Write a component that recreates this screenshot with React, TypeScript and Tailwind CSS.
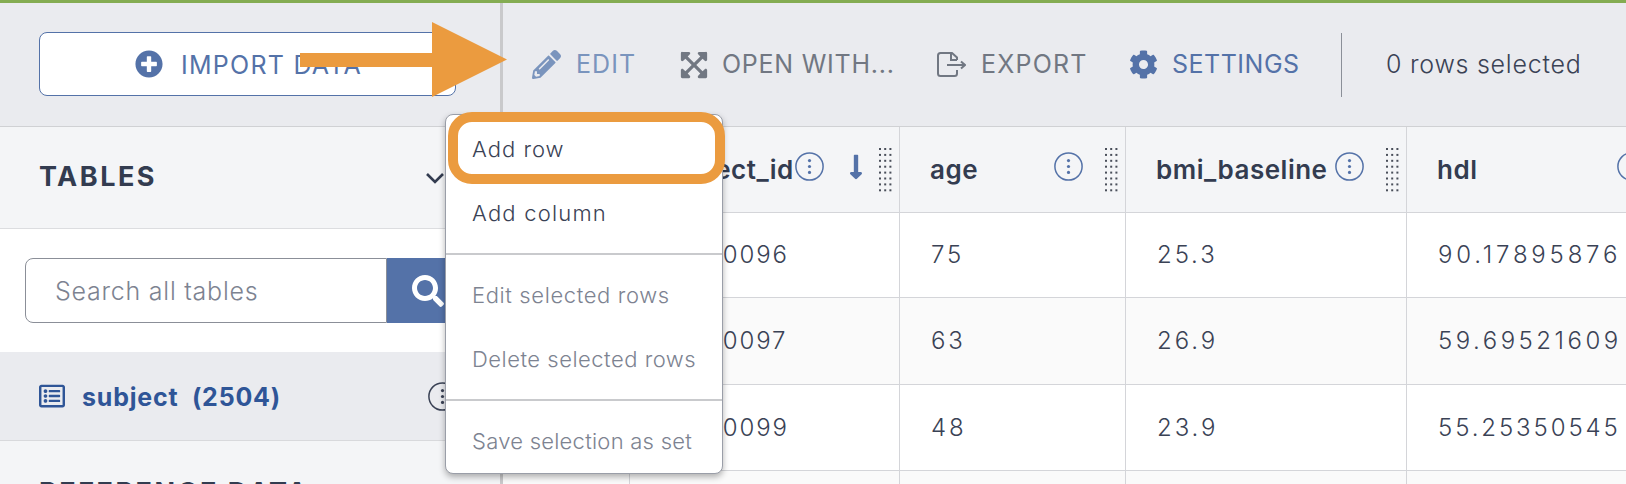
import React from "react";
import { FaPlusCircle, FaPencilAlt, FaExpandArrowsAlt, FaCog, FaSearch, FaLongArrowAltDown, FaRegListAlt } from "react-icons/fa";

const font = { fontFamily: "Inter, 'Noto Sans', 'Liberation Sans', sans-serif" };

function InfoDots({ dark }: { dark?: boolean }) {
  const c = dark ? "#3a4255" : "#5472a8";
  return (
    <svg width="29" height="29" viewBox="0 0 29 29" className="shrink-0">
      <circle cx="14.5" cy="14.5" r="13.6" fill="none" stroke={c} strokeWidth="1.5" />
      <circle cx="14.5" cy="8.6" r="1.6" fill={c} />
      <circle cx="14.5" cy="14.5" r="1.6" fill={c} />
      <circle cx="14.5" cy="20.4" r="1.6" fill={c} />
    </svg>
  );
}

function Grip() {
  const rows = [0, 1, 2, 3, 4, 5, 6, 7];
  const cols = [0, 1, 2];
  return (
    <svg width="13" height="44" viewBox="0 0 13 44" className="shrink-0 block">
      {rows.map((r) =>
        cols.map((k) => <rect key={r + "-" + k} x={k * 5.2} y={r * 5.9} width="2" height="2" fill="#4a4f5a" />)
      )}
    </svg>
  );
}

function ExportIcon() {
  return (
    <svg width="29" height="25" viewBox="0 0 29 25" fill="none" stroke="#717782" strokeWidth="2" className="shrink-0">
      <path d="M20 8 L20 5.5 L15 1 L3.5 1 Q1 1 1 3.5 L1 21.5 Q1 24 3.5 24 L17.5 24 Q20 24 20 21.5 L20 18" />
      <path d="M14 1.5 L14 8 L20 8" />
      <path d="M10 13 L27 13" />
      <path d="M24 9.5 L28 13 L24 16.5" />
    </svg>
  );
}

function Tool({ icon, label, width, color, gap, track }: { icon: React.ReactNode; label: string; width: string; color: string; gap: string; track: string }) {
  return (
    <div className={`flex items-center gap-[15px] ${gap}`}>
      {icon}
      <span className={`text-[25px] whitespace-nowrap ${track} ${width} ${color}`}>{label}</span>
    </div>
  );
}

function HeaderCell({ label, sort, pad }: { label: string; sort?: boolean; pad: string }) {
  return (
    <div className={`flex items-center h-full border-r border-[#d4d5d9] min-w-0 overflow-hidden ${pad}`}>
      <span className="text-[26px] font-semibold text-[#333c50] tracking-[0.5px] whitespace-nowrap">{label}</span>
      <div className="ml-auto flex items-center pr-[7px]">
        <span className="mb-[6px]"><InfoDots /></span>
        {sort && <FaLongArrowAltDown className="ml-[18px] mb-[6px] text-[#5472a8]" size={28} />}
        <span className={sort ? "ml-[9px]" : "ml-[22px]"}><Grip /></span>
      </div>
    </div>
  );
}

const rows = [
  { id: "1000096", age: "75", bmi: "25.3", hdl: "90.17895876", t: "tracking-[3.8px]", bg: "bg-white", h: "h-[85px]" },
  { id: "1000097", age: "63", bmi: "26.9", hdl: "59.69521609", t: "tracking-[3.5px]", bg: "bg-[#fafafa]", h: "h-[87px]" },
  { id: "1000099", age: "48", bmi: "23.9", hdl: "55.25350545", t: "tracking-[2.9px]", bg: "bg-white", h: "h-[86px]" },
  { id: "", age: "", bmi: "", hdl: "", t: "", bg: "bg-[#fafafa]", h: "h-[40px]" },
];

function Menu() {
  const item = "h-[64px] flex items-center pl-[26px] text-[22px] font-light whitespace-nowrap";
  return (
    <div className="absolute left-[445px] top-[114px] w-[278px] h-[360px] bg-white border border-[#9a9ea8] rounded-lg shadow-[0_3px_6px_rgba(0,0,0,0.3)] py-[2px]">
      <div className={`${item} tracking-[1px] text-[#3a4255]`}>Add row</div>
      <div className={`${item} tracking-[1.2px] text-[#3a4255]`}>Add column</div>
      <div className="h-[2px] bg-[#c9cacd] my-2" />
      <div className={`${item} tracking-[0.62px] text-[#7d8391]`}>Edit selected rows</div>
      <div className={`${item} tracking-[0.5px] text-[#7d8391]`}>Delete selected rows</div>
      <div className="h-[2px] bg-[#c9cacd] my-2" />
      <div className={`${item} tracking-[0.25px] text-[#7d8391]`}>Save selection as set</div>
    </div>
  );
}

export default function App() {
  return (
    <div className="relative h-[484px] w-full overflow-hidden bg-white" style={font}>
      <div className="h-[3px] bg-[#84ac52]" />
      <div className="flex h-[481px]">
        <aside className="w-[500px] shrink-0 flex flex-col">
          <div className="h-[124px] shrink-0 bg-[#eaebef] border-b border-[#d0d1d4] pl-[39px] pt-[29px]">
            <div className="w-[417px] h-[64px] bg-white border border-[#5472a8] rounded-lg flex items-center justify-center gap-[18px] pl-[2px]">
              <FaPlusCircle size={28} className="text-[#5472a8]" />
              <span className="text-[25px] pt-[3px] text-[#5472a8] tracking-[1.25px] whitespace-nowrap">IMPORT DATA</span>
            </div>
          </div>
          <div className="h-[102px] shrink-0 bg-[#f4f5f7] border-b border-[#dcdde0] flex items-center pl-[39px] pr-[55px] justify-between">
            <span className="text-[27px] font-bold text-[#333c50] tracking-[2.5px]">TABLES</span>
            <svg width="20" height="12" viewBox="0 0 20 12" fill="none" stroke="#333c50" strokeWidth="2.6"><path d="M2 2 L10 10 L18 2" /></svg>
          </div>
          <div className="h-[123px] shrink-0 bg-white pl-[25px] pt-[29px] flex items-start">
            <div className="w-[362px] h-[65px] border border-[#8b8f98] rounded-l-lg flex items-center pl-[29px] pt-[3px] text-[25px] font-light text-[#7d8391] tracking-[0.75px]">Search all tables</div>
            <div className="w-[81px] h-[65px] bg-[#5472a8] rounded-r-lg flex items-center justify-center"><FaSearch size={32} className="text-white" /></div>
          </div>
          <div className="h-[89px] shrink-0 bg-[#eaebef] border-b border-[#d8d9dc] flex items-center pl-[39px]">
            <FaRegListAlt size={26} className="text-[#2f5597]" />
            <span className="ml-[17px] pt-[3px] text-[25px] font-bold text-[#2f5597] whitespace-pre tracking-[0.8px]">subject  (2504)</span>
            <span className="ml-auto mr-[43px]"><InfoDots dark /></span>
          </div>
          <div className="flex-1 bg-[#f4f5f7] pl-[39px] pt-[32px]">
            <span className="text-[27px] font-bold text-[#333c50] tracking-[2.5px] whitespace-nowrap">REFERENCE DATA</span>
          </div>
        </aside>
        <div className="w-[3px] shrink-0 bg-[#c9c9cb]" />
        <main className="flex-1 min-w-0 flex flex-col">
          <div className="h-[124px] shrink-0 bg-[#eaebef] border-b border-[#d0d1d4] flex items-center pl-[29px]">
            <Tool gap="mr-[45px]" width="w-[60px]" color="text-[#7a94bd]" track="tracking-[1.05px]" label="EDIT" icon={<FaPencilAlt size={29} className="text-[#7a94bd]" />} />
            <Tool gap="mr-[44px]" width="w-[171px]" color="text-[#717782]" track="tracking-[0.75px]" label="OPEN WITH..." icon={<FaExpandArrowsAlt size={30} className="-mx-[2px] text-[#717782]" />} />
            <Tool gap="mr-[45px]" width="w-[104px]" color="text-[#717782]" track="tracking-[1.2px]" label="EXPORT" icon={<ExportIcon />} />
            <Tool gap="mr-[43px]" width="w-[126px]" color="text-[#5472a8]" track="tracking-[0.5px]" label="SETTINGS" icon={<FaCog size={29} className="-mx-px text-[#5472a8]" />} />
            <div className="w-px h-[64px] bg-[#8b8f98] mr-[44px]" />
            <span className="text-[25px] font-light text-[#3a4255] tracking-[0.75px] whitespace-nowrap">0 rows selected</span>
          </div>
          <div className="grid grid-cols-[127px_270px_226px_281px_1fr] h-[86px] shrink-0 bg-[#f4f5f7] border-b border-[#d4d5d9]">
            <div className="border-r border-[#d4d5d9]" />
            <HeaderCell label="subject_id" sort pad="pl-[30px]" />
            <HeaderCell label="age" pad="pl-[30px]" />
            <HeaderCell label="bmi_baseline" pad="pl-[30px]" />
            <div className="flex items-center h-full pl-[30px] overflow-hidden">
              <span className="text-[26px] font-semibold text-[#333c50] tracking-[0.5px]">hdl</span>
              <span className="ml-[140px] mb-[6px]"><InfoDots /></span>
            </div>
          </div>
          {rows.map((r, i) => (
            <div key={i} className={`grid grid-cols-[127px_270px_226px_281px_1fr] shrink-0 border-b border-[#d4d5d9] text-[24px] font-light text-[#3a4255] tracking-[2.9px] ${r.bg} ${r.h}`}>
              <div className="border-r border-[#d4d5d9]" />
              <div className="border-r border-[#d4d5d9] flex items-center pl-[48px] tracking-[1.9px]">{r.id}</div>
              <div className="border-r border-[#d4d5d9] flex items-center pl-[31px]">{r.age}</div>
              <div className="border-r border-[#d4d5d9] flex items-center pl-[31px]">{r.bmi}</div>
              <div className={`flex items-center pl-[31px] whitespace-nowrap ${r.t}`}>{r.hdl}</div>
            </div>
          ))}
        </main>
      </div>

      <Menu />

      <div className="absolute left-[448px] top-[112px] w-[277px] h-[72px] border-[10px] border-[#eb9b3f] rounded-[24px]" />
      <svg className="absolute left-[300px] top-[22px]" width="208" height="76" viewBox="0 0 208 76">
        <path d="M0 31 L132 31 L132 0 L207 37.5 L132 75 L132 45 L0 45 Z" fill="#eb9b3f" />
      </svg>
    </div>
  );
}
